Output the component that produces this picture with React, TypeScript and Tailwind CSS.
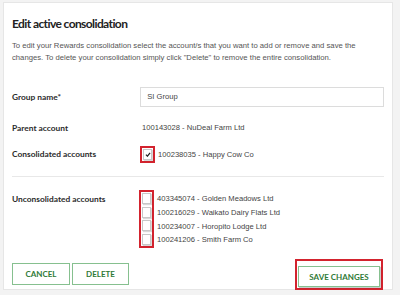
import React from "react";

const val = "font-['Liberation_Sans',Arial,sans-serif] text-[7.6px] text-[#444]";
const lab = "font-['Lato',sans-serif] font-bold text-[8.4px] text-[#2b2b2b]";

function Box({ checked }: { checked?: boolean }) {
  return (
    <div className="w-[9px] h-[11px] border border-[#c8c8c8] bg-white flex items-center justify-center shadow-[1px_1px_1px_rgba(0,0,0,0.15)]">
      {checked && (
        <svg width="6" height="5" viewBox="0 0 7 6">
          <path d="M1 3.2 L2.8 5 L6 1" stroke="#222" strokeWidth="1.5" fill="none" />
        </svg>
      )}
    </div>
  );
}

const rows = [
  "403345074 - Golden Meadows Ltd",
  "100216029 - Waikato Dairy Flats Ltd",
  "100234007 - Horopito Lodge Ltd",
  "100241206 - Smith Farm Co",
];

export default function App() {
  return (
    <div className="w-[400px] h-[295px] bg-[#f3f3f3] pt-[2px] pl-[3px] pr-[7px] pb-[5px]">
      <div className="h-full bg-white border border-[#e6e6e6] px-[8px] pt-[12px]">
        <h1 className="font-['Lato',sans-serif] font-bold text-[12px] tracking-[-0.6px] leading-[18px] text-[#222]">
          Edit active consolidation
        </h1>
        <p className="mt-[7px] font-['Liberation_Sans',Arial,sans-serif] text-[7.7px] leading-[12px] text-[#555]">
          To edit your Rewards consolidation select the account/s that you want to add or remove and save the
          changes. To delete your consolidation simply click "Delete" to remove the entire consolidation.
        </p>

        <div className="mt-[23px] flex items-center">
          <div className={`w-[130px] ${lab}`}>Group name*</div>
          <div className={`w-[247px] h-[20px] border border-[#dcdcdc] flex items-center pl-[6px] ${val}`}>
            SI Group
          </div>
        </div>

        <div className="mt-[14px] flex items-center h-[14px]">
          <div className={`w-[130px] ${lab}`}>Parent account</div>
          <div className={val}>100143028 - NuDeal Farm Ltd</div>
        </div>

        <div className="mt-[11px] flex items-center">
          <div className={`w-[128px] ${lab}`}>Consolidated accounts</div>
          <div className="border-2 border-[#d3232e] px-[1px] py-[1px]">
            <Box checked />
          </div>
          <div className={`ml-[3px] ${val}`}>100238035 - Happy Cow Co</div>
        </div>

        <div className="mt-[13px] border-t border-[#e8e8e8]" />

        <div className="mt-[13px] flex items-start">
          <div className={`w-[127px] mt-[2px] h-[13.7px] flex items-center ${lab}`}>Unconsolidated accounts</div>
          <div className="border-2 border-[#d3232e] px-[1px] py-[1px] flex flex-col gap-[2.5px]">
            <Box />
            <Box />
            <Box />
            <Box />
          </div>
          <div className="ml-[3px] mt-[2px] flex flex-col">
            {rows.map((r) => (
              <div key={r} className={`h-[13.7px] flex items-center ${val}`}>
                {r}
              </div>
            ))}
          </div>
        </div>

        <div className="mt-[11px] flex items-center">
          <button className="w-[58px] h-[22px] border border-[#86c08f] font-['Lato',sans-serif] font-bold text-[8px] text-[#2f7a36]">
            CANCEL
          </button>
          <button className="ml-[2px] w-[57px] h-[22px] border border-[#86c08f] font-['Lato',sans-serif] font-bold text-[8px] text-[#2f7a36]">
            DELETE
          </button>
          <div className="ml-auto mr-[1px] border-2 border-[#d3232e] p-[1px]">
            <button className="w-[82px] h-[21px] border border-[#86c08f] font-['Lato',sans-serif] font-bold text-[8px] text-[#2f7a36] shadow-[1px_1px_1px_rgba(0,0,0,0.2)]">
              SAVE CHANGES
            </button>
          </div>
        </div>
      </div>
    </div>
  );
}
